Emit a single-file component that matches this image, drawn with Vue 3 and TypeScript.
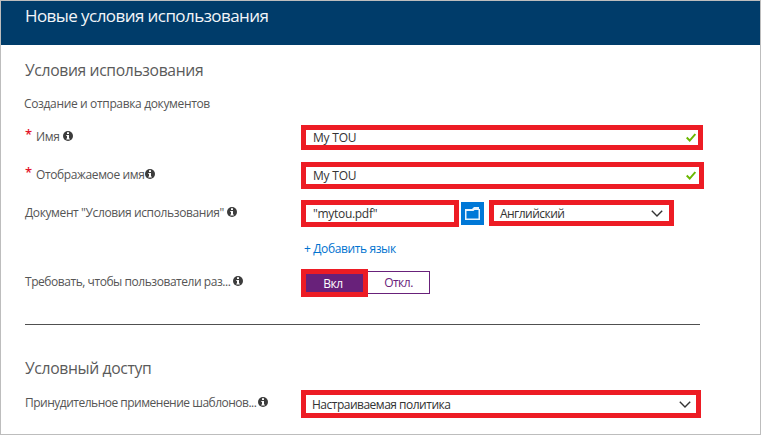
<script setup lang="ts">
import { ref } from 'vue'

const name = ref('My TOU')
const displayName = ref('My TOU')
const fileName = ref('"mytou.pdf"')
const language = ref('Английский')
const template = ref('Настраиваемая политика')
const expand = ref(true)
</script>

<template>
  <div class="blade">
    <header class="header"><h1 class="title">Новые условия использования</h1></header>
    <main class="content">
      <h2 class="section">Условия использования</h2>
      <p class="subtitle">Создание и отправка документов</p>

      <div class="row row-name">
        <label class="label required"><span class="star">*</span><span class="t-name">Имя</span>
          <svg class="info" viewBox="0 0 10 10"><circle cx="5" cy="5" r="5" /><path d="M4 1.3h2v1.7H4zM3.3 3.9H6v3.5h.8v1H3.3v-1H4V4.9h-.7z" /></svg>
        </label>
        <div class="field f-name"><span class="v-tou">{{ name }}</span>
          <svg class="check" viewBox="0 0 10 9"><path d="M.7 4.5 3.7 7.5 9.3 1" /></svg>
        </div>
      </div>

      <div class="row row-display">
        <label class="label required"><span class="star">*</span><span class="t-display">Отображаемое имя</span>
          <svg class="info" viewBox="0 0 10 10"><circle cx="5" cy="5" r="5" /><path d="M4 1.3h2v1.7H4zM3.3 3.9H6v3.5h.8v1H3.3v-1H4V4.9h-.7z" /></svg>
        </label>
        <div class="field f-display"><span class="v-tou">{{ displayName }}</span>
          <svg class="check" viewBox="0 0 10 9"><path d="M.7 4.5 3.7 7.5 9.3 1" /></svg>
        </div>
      </div>

      <div class="row row-doc">
        <label class="label"><span class="t-doc">Документ "Условия использования"</span>
          <svg class="info" viewBox="0 0 10 10"><circle cx="5" cy="5" r="5" /><path d="M4 1.3h2v1.7H4zM3.3 3.9H6v3.5h.8v1H3.3v-1H4V4.9h-.7z" /></svg>
        </label>
        <div class="field f-file"><span class="v-file">{{ fileName }}</span></div>
        <button class="browse" type="button" aria-label="Обзор">
          <svg viewBox="0 0 15 13"><path class="back" d="M0 2h7L9 0h5v2h1v11H0z" /><path class="front" d="M1.5 4h7l1-1h4v8.5h-12z" /></svg>
        </button>
        <div class="field f-lang"><span class="v-lang">{{ language }}</span>
          <svg class="chevron" viewBox="0 0 12 7"><path d="M.8.8 6 6 11.2.8" /></svg>
        </div>
      </div>

      <a class="add">+ Добавить язык</a>

      <div class="row row-expand">
        <label class="label"><span class="t-expand">Требовать, чтобы пользователи раз...</span>
          <svg class="info" viewBox="0 0 10 10"><circle cx="5" cy="5" r="5" /><path d="M4 1.3h2v1.7H4zM3.3 3.9H6v3.5h.8v1H3.3v-1H4V4.9h-.7z" /></svg>
        </label>
        <button class="toggle on" type="button" :aria-pressed="expand" @click="expand = true"><span class="v-on">Вкл</span></button>
        <button class="toggle off" type="button" :aria-pressed="!expand" @click="expand = false"><span class="v-off">Откл.</span></button>
      </div>

      <hr class="rule" />

      <h2 class="section access">Условный доступ</h2>

      <div class="row row-policy">
        <label class="label"><span class="t-policy">Принудительное применение шаблонов...</span>
          <svg class="info" viewBox="0 0 10 10"><circle cx="5" cy="5" r="5" /><path d="M4 1.3h2v1.7H4zM3.3 3.9H6v3.5h.8v1H3.3v-1H4V4.9h-.7z" /></svg>
        </label>
        <div class="field f-policy"><span class="v-policy">{{ template }}</span>
          <svg class="chevron" viewBox="0 0 12 7"><path d="M.8.8 6 6 11.2.8" /></svg>
        </div>
      </div>
    </main>
  </div>
</template>

<style>
body { margin: 0; overflow: hidden; }
</style>

<style scoped>
.blade { box-sizing: border-box; width: 761px; height: 435px; border: 1px solid #bdbdbd; background: #fff; font-family: "Open Sans", "Noto Sans", sans-serif; font-size: 12px; color: #555; white-space: nowrap; }
.blade * { box-sizing: border-box; }
.header { height: 44px; padding: 3px 0 0 24px; background: #003c6a; color: #f2f5f8; }
.title { margin: 0; font-size: 17px; line-height: 24px; font-weight: 400; letter-spacing: -.57px; }
.content { padding: 14px 0 0 24px; }
.section { margin: 0; font-size: 15.7px; line-height: 22px; font-weight: 400; letter-spacing: -.35px; color: #5a5a5a; }
.subtitle { margin: 14px 0 0 -1px; line-height: 18px; letter-spacing: -.35px; }
.row { display: flex; }
.row-name { margin-top: 12px; height: 25px; }
.row-display { margin-top: 12px; height: 27px; }
.row-doc { margin-top: 11px; height: 27px; }
.row-expand { margin-top: 11px; height: 28px; }
.row-policy { margin-top: 11px; height: 28px; }
.label { display: flex; align-items: center; width: 276px; height: 24px; flex: none; }
.row-name .label { height: 22px; }
.star { width: 11px; margin-top: -4px; font-size: 13px; font-weight: 600; line-height: 20px; color: #e3142a; }
.t-name { letter-spacing: -.3px; }
.t-display { letter-spacing: -.38px; }
.t-doc { letter-spacing: -.38px; }
.t-expand { letter-spacing: -.45px; }
.t-policy { letter-spacing: -.5px; }
.info { width: 10px; height: 10px; flex: none; margin-left: 2px; fill: #3c3c3c; }
.row-name .info, .row-doc .info { margin-left: 3px; }
.row-display .info { margin-left: 1px; }
.row-expand .info { margin-left: 3px; }
.info path { fill: #fff; }
.field { display: flex; align-items: center; justify-content: space-between; flex: none; border: 5px solid #ed1c24; padding: 0 7px; color: #333; }
.f-name { width: 402px; height: 25px; }
.f-display { width: 403px; height: 27px; }
.f-file { width: 158px; height: 27px; }
.f-lang { width: 185px; height: 26px; margin-left: 5px; padding: 0 6px; }
.f-policy { width: 400px; height: 28px; padding: 0 5px 0 6px; }
.v-tou { letter-spacing: -.2px; }
.v-file { letter-spacing: -.3px; }
.v-lang { letter-spacing: -.53px; }
.v-policy { letter-spacing: -.5px; }
.check { width: 10px; height: 9px; margin-right: -5px; fill: none; stroke: #6bb700; stroke-width: 1.9; }
.f-display .check { margin-right: -4px; }
.chevron { width: 12px; height: 7px; fill: none; stroke: #333; stroke-width: 1.4; }
.browse { display: grid; place-items: center; width: 23px; height: 23px; margin: 2px 0 0 2px; padding: 0; border: 0; background: #0078d7; }
.browse svg { width: 15px; height: 13px; }
.back { fill: #e8f3fc; }
.front { fill: #0078d7; }
.add { display: block; margin: 13px 0 0 279px; line-height: 18px; letter-spacing: -.38px; color: #0072cf; }
.toggle { padding: 0; font: inherit; letter-spacing: -.5px; }
.on { width: 67px; height: 28px; padding-right: 3px; border: 5px solid #ed1c24; background: #68217a; color: #fff; }
.off { width: 62px; height: 23px; margin-top: 2px; border: 1px solid #68217a; border-left: 0; background: #fff; color: #68217a; }
.rule { width: 675px; height: 1px; margin: 27px 0 0; border: 0; background: #505050; }
.access { margin-top: 32px; }
</style>
